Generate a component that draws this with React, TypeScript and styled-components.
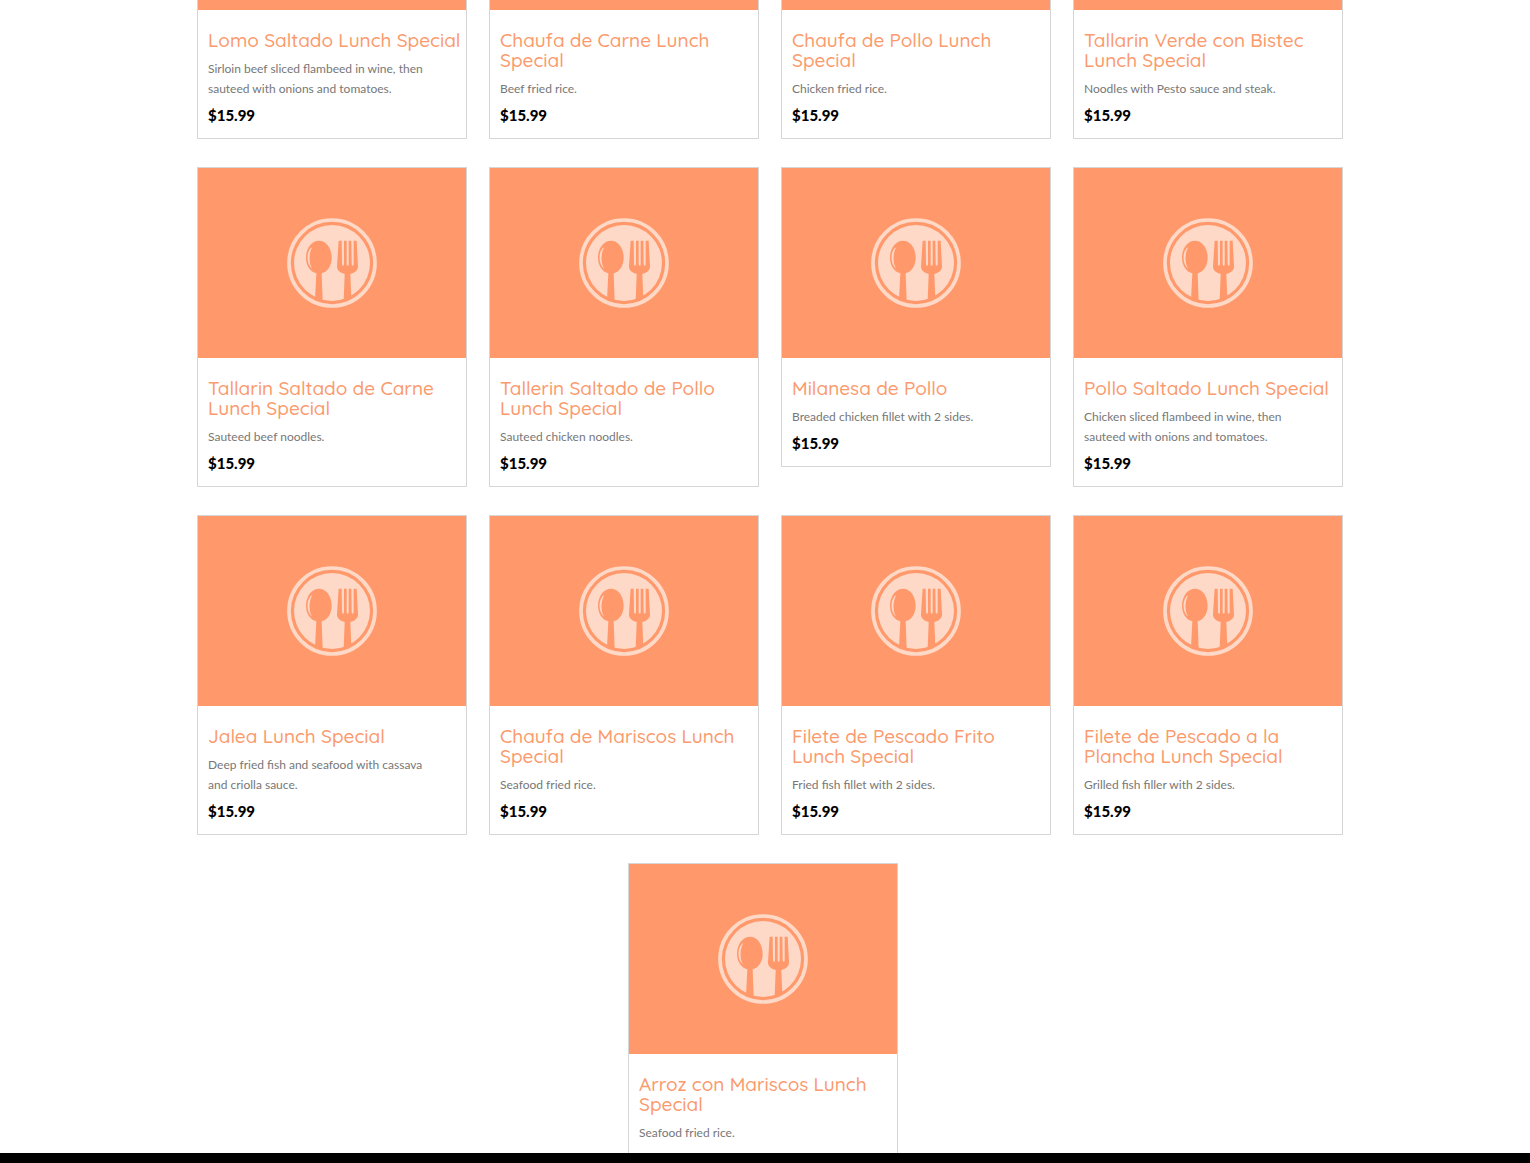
import React from "react";
import styled, { createGlobalStyle } from "styled-components";

const GlobalStyle = createGlobalStyle`
  *, *::before, *::after { box-sizing: border-box; }
  body {
    margin: 0;
    background: #fff;
    font-family: Lato, "Open Sans", sans-serif;
  }
  h3, p, ul { margin: 0; padding: 0; }
`;

const Page = styled.div`
  display: flex;
  flex-direction: column;
  height: 100vh;
`;

const Menu = styled.main`
  flex: 1;
  min-height: 0;
  overflow: hidden;
  display: flex;
  flex-direction: column;
  align-items: center;
  gap: 28px;
  padding-left: 10px;
`;

const Row = styled.ul<{ $last?: boolean }>`
  list-style: none;
  display: flex;
  flex-wrap: wrap;
  flex-shrink: 0;
  justify-content: center;
  align-items: flex-start;
  gap: 28px 22px;
  max-width: 1146px;
  padding-right: ${(p) => (p.$last ? "14px" : "0")};
`;

const Card = styled.li<{ $cut?: boolean }>`
  width: 270px;
  border: 1px solid #d6d6d6;
  border-top-width: ${(p) => (p.$cut ? "0" : "1px")};
`;

const Picture = styled.div<{ $cut?: boolean }>`
  display: flex;
  align-items: center;
  justify-content: center;
  height: ${(p) => (p.$cut ? "10px" : "190px")};
  background: #ff996b;
`;

const Details = styled.div`
  display: flex;
  flex-direction: column;
  padding: 20px 0 13px 10px;
`;

const Title = styled.h3`
  color: #fb9a6d;
  font-family: Quicksand, Lato, sans-serif;
  font-size: 19px;
  font-weight: 500;
  line-height: 20px;
`;

const Description = styled.p`
  margin-top: 9px;
  padding-right: 40px;
  color: #777;
  font-size: 12px;
  line-height: 20px;
`;

const Price = styled.p`
  margin-top: 6px;
  color: #000;
  font-size: 15px;
  font-weight: 900;
  line-height: 20px;
`;

const BottomBar = styled.footer`
  flex: none;
  height: 10px;
  background: #000;
`;

const PlateIcon = () => (
  <svg width="90" height="90" viewBox="22 24 270 270" aria-hidden="true">
    <circle cx="157" cy="159" r="129" fill="none" stroke="#ffd9c7" strokeWidth="11" />
    <circle cx="157" cy="159" r="114" fill="#ffd9c7" />
    <g fill="#ff996b">
      <path d="M118 92C97 92 79 113 79 143C79 167 92 185 110 190L106 270Q118 273 129 272L126 190C144 185 156 167 156 143C156 113 139 92 118 92Z" />
      <path d="M177 92H186L187 162Q187 167 190 167Q193 167 193 162V92H201V162Q201 167 204 167Q207 167 207 162V92H215L216 162Q216 167 219 167Q222 167 222 162V92H231L235 168C236 182 224 189 212 192L215 264Q204 269 192 271L195 192C183 189 171 182 172 168Z" />
    </g>
    <path
      d="M98 111C80 120 78 160 97 176C87 158 87 130 98 111Z"
      fill="#ffd9c7"
    />
  </svg>
);

type Dish = { title: string; description: string; price?: string };

const rows: Dish[][] = [
  [
    { title: "Lomo Saltado Lunch Special", description: "Sirloin beef sliced flambeed in wine, then sauteed with onions and tomatoes.", price: "$15.99" },
    { title: "Chaufa de Carne Lunch Special", description: "Beef fried rice.", price: "$15.99" },
    { title: "Chaufa de Pollo Lunch Special", description: "Chicken fried rice.", price: "$15.99" },
    { title: "Tallarin Verde con Bistec Lunch Special", description: "Noodles with Pesto sauce and steak.", price: "$15.99" },
  ],
  [
    { title: "Tallarin Saltado de Carne Lunch Special", description: "Sauteed beef noodles.", price: "$15.99" },
    { title: "Tallerin Saltado de Pollo Lunch Special", description: "Sauteed chicken noodles.", price: "$15.99" },
    { title: "Milanesa de Pollo", description: "Breaded chicken fillet with 2 sides.", price: "$15.99" },
    { title: "Pollo Saltado Lunch Special", description: "Chicken sliced flambeed in wine, then sauteed with onions and tomatoes.", price: "$15.99" },
  ],
  [
    { title: "Jalea Lunch Special", description: "Deep fried fish and seafood with cassava and criolla sauce.", price: "$15.99" },
    { title: "Chaufa de Mariscos Lunch Special", description: "Seafood fried rice.", price: "$15.99" },
    { title: "Filete de Pescado Frito Lunch Special", description: "Fried fish fillet with 2 sides.", price: "$15.99" },
    { title: "Filete de Pescado a la Plancha Lunch Special", description: "Grilled fish filler with 2 sides.", price: "$15.99" },
  ],
  [{ title: "Arroz con Mariscos Lunch Special", description: "Seafood fried rice." }],
];

export default function App() {
  return (
    <>
      <GlobalStyle />
      <Page>
        <Menu>
          {rows.map((dishes, index) => {
            const cut = index === 0;
            return (
              <Row key={index} $last={index === rows.length - 1}>
                {dishes.map((dish) => (
                  <Card key={dish.title} $cut={cut}>
                    <Picture $cut={cut}>{!cut && <PlateIcon />}</Picture>
                    <Details>
                      <Title>{dish.title}</Title>
                      <Description>{dish.description}</Description>
                      {dish.price && <Price>{dish.price}</Price>}
                    </Details>
                  </Card>
                ))}
              </Row>
            );
          })}
        </Menu>
        <BottomBar />
      </Page>
    </>
  );
}
